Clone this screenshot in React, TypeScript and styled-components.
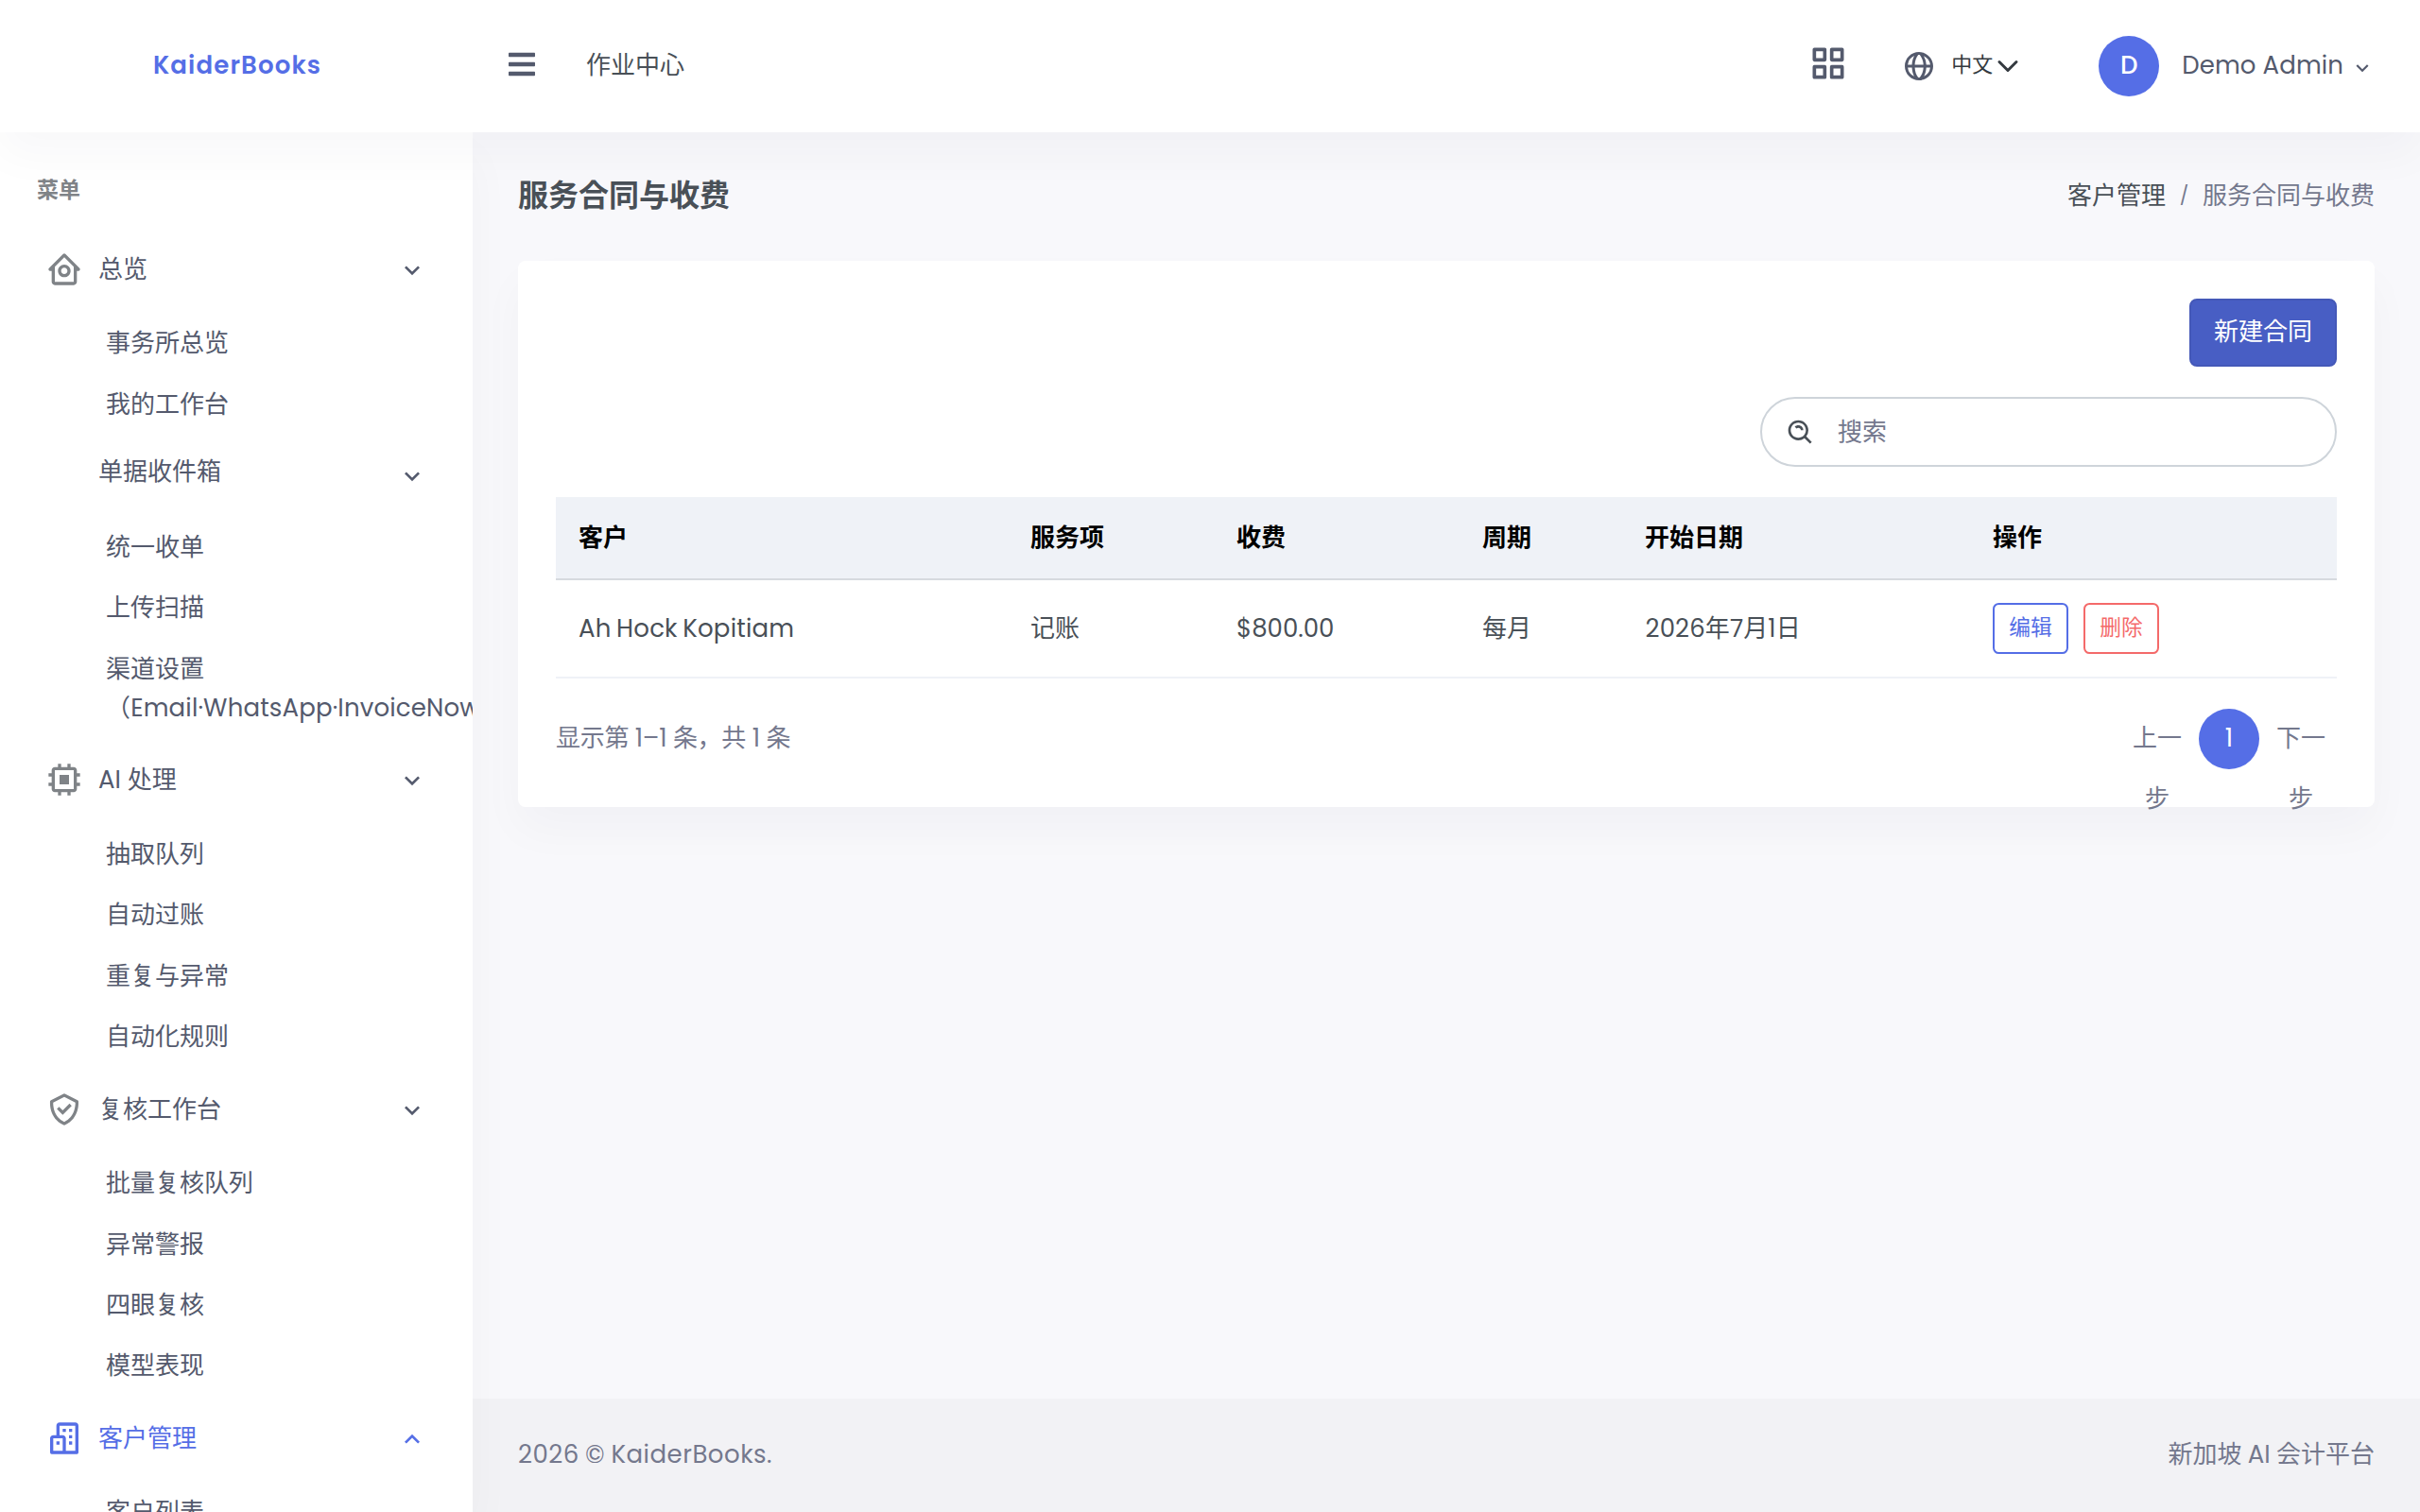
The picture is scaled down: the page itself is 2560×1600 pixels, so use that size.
import React from 'react';
import styled, { createGlobalStyle } from 'styled-components';
import { FaBars } from 'react-icons/fa';
import {
  BiBuildings,
  BiCheckShield,
  BiChip,
  BiGlobe,
  BiGridAlt,
  BiHomeCircle,
  BiSearchAlt,
} from 'react-icons/bi';

const color = {
  primary: '#556ee6',
  danger: '#f46a6a',
  text: '#495057',
  muted: '#74788d',
  menu: '#545a6d',
  icon: '#7f8387',
  page: '#f8f8fb',
  line: '#eff2f7',
};
const softShadow = '0 24px 48px rgba(18, 38, 63, 0.03)';

const GlobalStyle = createGlobalStyle`
  *, *::before, *::after { box-sizing: border-box; }
  body {
    margin: 0;
    background: ${color.page};
    color: ${color.text};
    font-family: Poppins, "Noto Sans CJK JP", "Noto Sans CJK SC", sans-serif;
    font-size: 26px;
    line-height: 39px;
  }
`;

const Page = styled.div`
  display: grid;
  grid-template: 140px minmax(0, 1fr) / 500px minmax(0, 1fr);
  height: 100vh;
  overflow: hidden;
`;

/* ---------- Top bar ---------- */

const Topbar = styled.header`
  grid-column: 1 / -1;
  z-index: 3;
  display: flex;
  align-items: center;
  background: #fff;
  box-shadow: ${softShadow};
`;

const Brand = styled.div`
  width: 500px;
  padding: 0 0 1px 2px;
  text-align: center;
  color: ${color.primary};
  font-weight: 600;
  letter-spacing: 1.15px;
`;

const MenuButton = styled.span`
  display: flex;
  margin: 0 52px 5px 36px;
  color: ${color.menu};
  font-size: 32px;
`;

const WorkCenter = styled.span`
  flex: 1;
  padding-bottom: 1px;
`;

const AppsIcon = styled.span`
  display: flex;
  margin: 0 56px 7px 0;
  color: ${color.menu};
  font-size: 44px;
`;

const Language = styled.div`
  display: flex;
  align-items: center;
  margin-right: 80px;
  color: #343a40;
  font-size: 22px;
`;

const GlobeIcon = styled.span`
  display: flex;
  margin-right: 16px;
  color: ${color.menu};
  font-size: 36px;
`;

const LanguageLabel = styled.span`
  padding-bottom: 3px;
`;

const SelectArrow = styled.svg`
  width: 32px;
  height: 24px;
`;

const Avatar = styled.span`
  display: grid;
  place-items: center;
  width: 64px;
  height: 64px;
  padding-bottom: 1px;
  border-radius: 50%;
  background: ${color.primary};
  color: #fff;
  font-weight: 500;
`;

const UserName = styled.span`
  margin: 0 7px 0 24px;
  padding-bottom: 1px;
  color: ${color.menu};
  letter-spacing: 0.1px;
`;

const UserChevron = styled.span`
  display: flex;
  margin: 3px 48px 0 0;
  color: ${color.menu};
`;

/* ---------- Sidebar ---------- */

const SidebarFrame = styled.div`
  z-index: 2;
  display: grid;
  min-height: 0;
  box-shadow: ${softShadow};
`;

const Sidebar = styled.nav`
  overflow: hidden;
  background: #fff;
`;

const SidebarTitle = styled.div`
  display: flex;
  align-items: center;
  height: 100px;
  padding: 22px 39px 0;
  color: ${color.icon};
  font-size: 23px;
  font-weight: 600;
`;

const GroupHeader = styled.div<{ $active?: boolean; $plain?: boolean }>`
  display: flex;
  align-items: flex-start;
  height: ${p => (p.$plain ? 86.8 : 90.4)}px;
  padding: ${p => (p.$plain ? 20.6 : 25.8)}px 49px 0 48px;
  color: ${p => (p.$active ? color.primary : color.menu)};
`;

const GroupIcon = styled.span<{ $active?: boolean }>`
  display: flex;
  width: 56px;
  margin-top: -1px;
  color: ${p => (p.$active ? color.primary : color.icon)};
  font-size: 40px;
`;

const GroupLabel = styled.span`
  flex: 1;
`;

const GroupChevron = styled.span<{ $plain?: boolean }>`
  display: flex;
  margin: ${p => (p.$plain ? 8 : 4)}px -0.5px 0 0;
`;

const SubItem = styled.div`
  padding: 13.7px 60px 11.8px 112px;
  color: ${color.menu};
`;

const NoBreak = styled.span`
  display: inline-block;
  margin-bottom: -5.6px;
  line-height: 43px;
  white-space: nowrap;
  letter-spacing: 0.16px;
`;

/* ---------- Content ---------- */

const Main = styled.div`
  display: flex;
  flex-direction: column;
  min-width: 0;
`;

const Content = styled.main`
  flex: 1;
  padding: 0 48px;
`;

const TitleRow = styled.div`
  display: flex;
  align-items: center;
  justify-content: space-between;
  height: 136px;
  padding-bottom: 2px;
`;

const Title = styled.h1`
  margin: 0 0 2px;
  font-size: 32px;
  font-weight: 600;
`;

const Breadcrumb = styled.div`
  display: flex;
  color: ${color.muted};
`;

const Crumb = styled.span`
  color: ${color.text};
`;

const Slash = styled.span`
  width: 39px;
  text-align: center;
  font-size: 20px;
`;

const Card = styled.section`
  height: 578px;
  padding: 40px;
  border-radius: 8px;
  background: #fff;
  box-shadow: ${softShadow};
`;

const CardRow = styled.div`
  display: flex;
  justify-content: flex-end;
  margin-bottom: 32px;
`;

const PrimaryButton = styled.button`
  width: 156px;
  height: 72px;
  padding: 0 0 1px;
  border: 2px solid #4458b8;
  border-radius: 8px;
  background: #485ec4;
  color: #fff;
  font: inherit;
`;

const SearchBox = styled.div`
  display: flex;
  align-items: center;
  width: 610px;
  height: 74px;
  padding-left: 25px;
  border: 2px solid #ced4da;
  border-radius: 60px;
  color: ${color.muted};
`;

const SearchIcon = styled.span`
  display: flex;
  margin: 1px 23px 0 0;
  color: ${color.text};
  font-size: 32px;
`;

const Table = styled.table`
  width: 100%;
  table-layout: fixed;
  border-collapse: separate;
  border-spacing: 0;
`;

const HeadCell = styled.th<{ $width: number }>`
  width: ${p => p.$width}px;
  height: 88px;
  padding: 1px 24px 0;
  border-bottom: 2px solid #d6dadf;
  background: ${color.line};
  color: #000;
  font-weight: 600;
  text-align: left;
`;

const Cell = styled.td`
  height: 104px;
  padding: 0 24px;
  border-bottom: 2px solid ${color.line};
`;

const ClientName = styled.span`
  letter-spacing: 0.2px;
  word-spacing: -1.6px;
`;

const StartDate = styled.span`
  padding-left: 0.6px;
  letter-spacing: 0.12px;
`;

const Actions = styled.div`
  display: flex;
  gap: 16px;
`;

const SmallButton = styled.button<{ $tone: string }>`
  width: 80px;
  height: 54px;
  padding: 0 0 2px;
  border: 2px solid ${p => p.$tone};
  border-radius: 6.4px;
  background: transparent;
  color: ${p => p.$tone};
  font: inherit;
  font-size: 22.75px;
  line-height: 34px;
`;

const TableFooter = styled.div`
  display: flex;
  justify-content: space-between;
  height: 64px;
  margin-top: 32px;
  color: ${color.muted};
`;

const Summary = styled.span`
  padding-top: 12px;
  letter-spacing: -0.28px;
`;

const Pager = styled.div`
  display: flex;
  gap: 12px;
  padding-right: 6px;
`;

const PageLink = styled.span<{ $active?: boolean }>`
  width: 64px;
  height: 64px;
  border-radius: 50%;
  background: ${p => (p.$active ? color.primary : 'transparent')};
  color: ${p => (p.$active ? '#fff' : color.muted)};
  line-height: 64px;
  text-align: center;
`;

const PageLabel = styled.span`
  display: block;
  margin-top: -1px;
`;

const Footer = styled.footer`
  display: flex;
  align-items: center;
  justify-content: space-between;
  height: 120px;
  padding: 0 48px 1px;
  background: #f2f2f5;
  color: ${color.muted};
`;

const Copyright = styled.span`
  letter-spacing: 0.51px;
  word-spacing: -1.2px;
`;

const Tagline = styled.span`
  word-spacing: -0.7px;
`;

/* ---------- Data ---------- */

type Group = {
  label: string;
  icon?: React.ReactNode;
  active?: boolean;
  items: React.ReactNode[];
};

const groups: Group[] = [
  { label: '总览', icon: <BiHomeCircle />, items: ['事务所总览', '我的工作台'] },
  {
    label: '单据收件箱',
    items: [
      '统一收单',
      '上传扫描',
      <>
        渠道设置<NoBreak>（Email·WhatsApp·InvoiceNow）</NoBreak>
      </>,
    ],
  },
  { label: 'AI 处理', icon: <BiChip />, items: ['抽取队列', '自动过账', '重复与异常', '自动化规则'] },
  { label: '复核工作台', icon: <BiCheckShield />, items: ['批量复核队列', '异常警报', '四眼复核', '模型表现'] },
  { label: '客户管理', icon: <BiBuildings />, active: true, items: ['客户列表'] },
];

const columns = [
  { label: '客户', width: 478 },
  { label: '服务项', width: 218 },
  { label: '收费', width: 260 },
  { label: '周期', width: 172 },
  { label: '开始日期', width: 368 },
  { label: '操作', width: 388 },
];

const contracts = [
  { client: 'Ah Hock Kopitiam', service: '记账', fee: '$800.00', cycle: '每月', start: '2026年7月1日' },
];

function Chevron({ size, up }: { size: number; up?: boolean }) {
  return (
    <svg width={size} height={size} viewBox="0 0 24 24" fill="currentColor">
      <path
        d={
          up
            ? 'M7.41 15.41 12 10.83l4.59 4.58L18 14l-6-6-6 6z'
            : 'M7.41 8.58 12 13.17l4.59-4.59L18 10l-6 6-6-6z'
        }
      />
    </svg>
  );
}

export default function App() {
  return (
    <>
      <GlobalStyle />
      <Page>
        <Topbar>
          <Brand>KaiderBooks</Brand>
          <MenuButton><FaBars /></MenuButton>
          <WorkCenter>作业中心</WorkCenter>
          <AppsIcon><BiGridAlt /></AppsIcon>
          <Language>
            <GlobeIcon><BiGlobe /></GlobeIcon>
            <LanguageLabel>中文</LanguageLabel>
            <SelectArrow viewBox="0 0 16 16" fill="none" stroke="#343a40" strokeWidth="2" strokeLinecap="round" strokeLinejoin="round">
              <path d="m2 5 6 6 6-6" />
            </SelectArrow>
          </Language>
          <Avatar>D</Avatar>
          <UserName>Demo Admin</UserName>
          <UserChevron><Chevron size={26} /></UserChevron>
        </Topbar>

        <SidebarFrame>
          <Sidebar>
            <SidebarTitle>菜单</SidebarTitle>
            {groups.map(group => (
              <React.Fragment key={group.label}>
                <GroupHeader $active={group.active} $plain={!group.icon}>
                  <GroupIcon $active={group.active}>{group.icon}</GroupIcon>
                  <GroupLabel>{group.label}</GroupLabel>
                  <GroupChevron $plain={!group.icon}>
                    <Chevron size={32} up={group.active} />
                  </GroupChevron>
                </GroupHeader>
                {group.items.map((item, i) => (
                  <SubItem key={i}>{item}</SubItem>
                ))}
              </React.Fragment>
            ))}
          </Sidebar>
        </SidebarFrame>

        <Main>
          <Content>
            <TitleRow>
              <Title>服务合同与收费</Title>
              <Breadcrumb>
                <Crumb>客户管理</Crumb>
                <Slash>/</Slash>
                <span>服务合同与收费</span>
              </Breadcrumb>
            </TitleRow>
            <Card>
              <CardRow>
                <PrimaryButton>新建合同</PrimaryButton>
              </CardRow>
              <CardRow>
                <SearchBox>
                  <SearchIcon><BiSearchAlt /></SearchIcon>
                  搜索
                </SearchBox>
              </CardRow>
              <Table>
                <thead>
                  <tr>
                    {columns.map(c => (
                      <HeadCell key={c.label} $width={c.width}>{c.label}</HeadCell>
                    ))}
                  </tr>
                </thead>
                <tbody>
                  {contracts.map(row => (
                    <tr key={row.client}>
                      <Cell><ClientName>{row.client}</ClientName></Cell>
                      <Cell>{row.service}</Cell>
                      <Cell>{row.fee}</Cell>
                      <Cell>{row.cycle}</Cell>
                      <Cell><StartDate>{row.start}</StartDate></Cell>
                      <Cell>
                        <Actions>
                          <SmallButton $tone={color.primary}>编辑</SmallButton>
                          <SmallButton $tone={color.danger}>删除</SmallButton>
                        </Actions>
                      </Cell>
                    </tr>
                  ))}
                </tbody>
              </Table>
              <TableFooter>
                <Summary>显示第 1–1 条，共 1 条</Summary>
                <Pager>
                  <PageLink><PageLabel>上一步</PageLabel></PageLink>
                  <PageLink $active><PageLabel>1</PageLabel></PageLink>
                  <PageLink><PageLabel>下一步</PageLabel></PageLink>
                </Pager>
              </TableFooter>
            </Card>
          </Content>
          <Footer>
            <Copyright>2026 © KaiderBooks.</Copyright>
            <Tagline>新加坡 AI 会计平台</Tagline>
          </Footer>
        </Main>
      </Page>
    </>
  );
}
